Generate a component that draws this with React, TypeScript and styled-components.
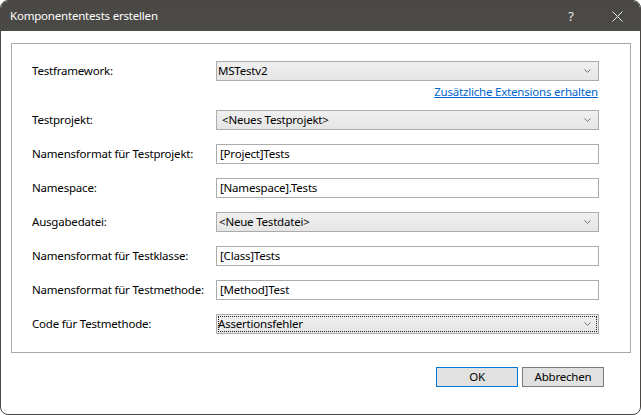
import React from "react";
import styled, { createGlobalStyle } from "styled-components";

const Global = createGlobalStyle`
  html, body { margin: 0; padding: 0; background: #ffffff; }
  body { font-family: "Noto Sans", "Open Sans", sans-serif; font-size: 11.5px; letter-spacing: -0.2px; color: #000; }
  * { box-sizing: border-box; }
`;

const Window = styled.div`
  width: 641px;
  height: 415px;
  border: 1px solid #4a4846;
  border-radius: 8px;
  background: #ffffff;
  display: flex;
  flex-direction: column;
  overflow: hidden;
`;

const TitleBar = styled.div`
  height: 30px;
  flex: none;
  background: #4b4946;
  color: #ffffff;
  display: flex;
  align-items: center;
  padding-left: 9px;
`;

const Title = styled.div`
  flex: 1;
  margin-top: -1px;
`;

const TitleButton = styled.div<{ $w: number }>`
  width: ${(p) => p.$w}px;
  height: 30px;
  display: flex;
  align-items: center;
  justify-content: center;
  color: #e8e8e8;
  font-size: 13px;
`;

const Body = styled.div`
  flex: 1;
  display: flex;
  flex-direction: column;
  padding: 12px 9px 0 10px;
`;

const GroupBox = styled.div`
  border: 1px solid #a9a9a9;
  padding: 17px 31px 18px 20px;
  display: flex;
  flex-direction: column;
  gap: 14px;
`;

const Row = styled.div`
  display: grid;
  grid-template-columns: 184px 1fr;
  align-items: center;
  height: 20px;
`;

const Block = styled.div`
  display: grid;
  grid-template-columns: 184px 1fr;
  grid-template-rows: 20px 15px;
  align-items: center;
`;

const Label = styled.div`
  white-space: nowrap;
  line-height: 16px;
`;

const Combo = styled.div<{ $indent: number; $focus?: boolean }>`
  position: relative;
  height: 20px;
  border: 1px solid #acacac;
  background: linear-gradient(#f0f0f0, #e5e5e5);
  display: flex;
  align-items: center;
  padding-left: ${(p) => p.$indent}px;
  line-height: 16px;
  &::after {
    content: "";
    display: ${(p) => (p.$focus ? "block" : "none")};
    position: absolute;
    inset: 1px;
    border: 1px dotted #222;
  }
`;

const ComboText = styled.span`
  flex: 1;
`;

const Chevron = styled.svg`
  width: 7px;
  height: 4px;
  margin-right: 7px;
`;

const Input = styled.div`
  height: 20px;
  border: 1px solid #ababab;
  background: #ffffff;
  display: flex;
  align-items: center;
  padding-left: 3px;
  line-height: 16px;
`;

const LinkCell = styled.div`
  grid-column: 2;
  text-align: right;
  padding-right: 1px;
  line-height: 15px;
  margin-top: 6px;
`;

const Link = styled.a`
  color: #0066cc;
  text-decoration: underline;
  cursor: pointer;
`;

const Footer = styled.div`
  display: flex;
  justify-content: flex-end;
  gap: 4px;
  padding: 14px 27px 0 0;
`;

const Button = styled.button<{ $default?: boolean }>`
  width: 82px;
  height: 20px;
  background: #e1e1e1;
  border: 1px solid ${(p) => (p.$default ? "#0078d7" : "#7a7a7a")};
  font-family: inherit;
  font-size: inherit;
  letter-spacing: inherit;
  color: #000;
  padding: 0;
  line-height: 16px;
`;

const ChevronIcon = () => (
  <Chevron viewBox="0 0 7 4">
    <path d="M0.5 0.5 L3.5 3.3 L6.5 0.5" fill="none" stroke="#707070" strokeWidth="1" />
  </Chevron>
);

const ComboBox = ({ value, indent, focus }: { value: string; indent: number; focus?: boolean }) => (
  <Combo $indent={indent} $focus={focus}>
    <ComboText>{value}</ComboText>
    <ChevronIcon />
  </Combo>
);

export default function App() {
  return (
    <>
      <Global />
      <Window>
        <TitleBar>
          <Title>Komponententests erstellen</Title>
          <TitleButton $w={46}>?</TitleButton>
          <TitleButton $w={46}>
            <svg width="11" height="11" viewBox="0 0 11 11">
              <path d="M0.5 0.5 L10.5 10.5 M10.5 0.5 L0.5 10.5" stroke="#e8e8e8" strokeWidth="1" />
            </svg>
          </TitleButton>
        </TitleBar>
        <Body>
          <GroupBox>
            <Block>
              <Label>Testframework:</Label>
              <ComboBox value="MSTestv2" indent={1} />
              <LinkCell>
                <Link>Zusätzliche Extensions erhalten</Link>
              </LinkCell>
            </Block>
            <Row>
              <Label>Testprojekt:</Label>
              <ComboBox value="<Neues Testprojekt>" indent={5} />
            </Row>
            <Row>
              <Label>Namensformat für Testprojekt:</Label>
              <Input>[Project]Tests</Input>
            </Row>
            <Row>
              <Label>Namespace:</Label>
              <Input>[Namespace].Tests</Input>
            </Row>
            <Row>
              <Label>Ausgabedatei:</Label>
              <ComboBox value="<Neue Testdatei>" indent={2} />
            </Row>
            <Row>
              <Label>Namensformat für Testklasse:</Label>
              <Input>[Class]Tests</Input>
            </Row>
            <Row>
              <Label>Namensformat für Testmethode:</Label>
              <Input>[Method]Test</Input>
            </Row>
            <Row>
              <Label>Code für Testmethode:</Label>
              <ComboBox value="Assertionsfehler" indent={1} focus />
            </Row>
          </GroupBox>
          <Footer>
            <Button $default>OK</Button>
            <Button>Abbrechen</Button>
          </Footer>
        </Body>
      </Window>
    </>
  );
}
